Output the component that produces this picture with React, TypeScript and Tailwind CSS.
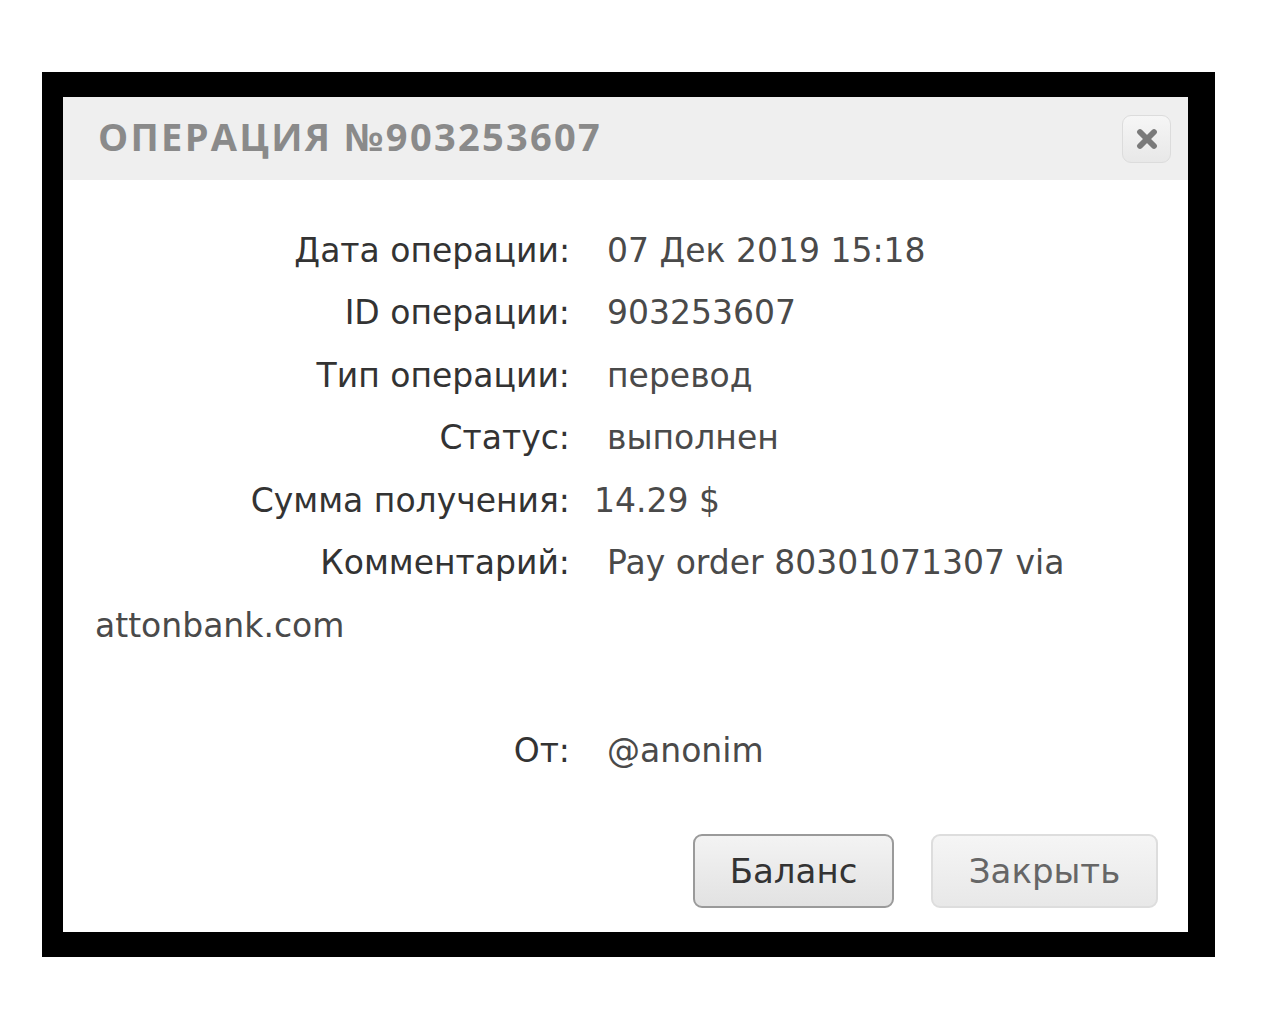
import { X } from "lucide-react";

const rows = [
  { label: "Дата операции:", value: "07 Дек 2019 15:18" },
  { label: "ID операции:", value: "903253607" },
  { label: "Тип операции:", value: "перевод" },
  { label: "Статус:", value: "выполнен" },
  { label: "Сумма получения:", value: "14.29 $", tight: true },
  { label: "Комментарий:", value: "Pay order 80301071307 via" },
];

function Row({ label, value, tight }: { label: string; value: string; tight?: boolean }) {
  return (
    <div className="flex h-[62.5px] items-center">
      <div className="w-[507px] shrink-0 text-right text-[#333]">{label}</div>
      <div className={tight ? "pl-[24px] text-[#4a4a4a]" : "pl-[37px] text-[#4a4a4a]"}>{value}</div>
    </div>
  );
}

export default function App() {
  return (
    <div className="min-h-[1024px] bg-white pl-[42px] pt-[72px]">
      <div className="w-[1173px] h-[885px] bg-black pl-[21px] pt-[25px]">
        <div className="w-[1125px] h-[835px] bg-white flex flex-col">
          {/* header */}
          <div className="h-[83px] bg-[#efefef] flex items-center justify-between pl-[35px] pr-[17px]">
            <h1
              className="text-[38px] font-bold tracking-[0.06em] text-[#8a8a8a] leading-none pb-[6px]"
              style={{ fontFamily: '"Open Sans", sans-serif' }}
            >
              ОПЕРАЦИЯ №903253607
            </h1>
            <button className="w-[49px] h-[48px] rounded-[9px] border border-[#dcdcdc] bg-gradient-to-b from-[#f6f6f6] to-[#e8e8e8] flex items-center justify-center">
              <X className="w-[28px] h-[28px] text-[#7a7a7a]" strokeWidth={5} />
            </button>
          </div>

          {/* body */}
          <div
            className="flex-1 flex flex-col pt-[39px] text-[33px] leading-none"
            style={{ fontFamily: '"DejaVu Sans", sans-serif' }}
          >
            {rows.map((r) => (
              <Row key={r.label} label={r.label} value={r.value} tight={r.tight} />
            ))}
            <div className="h-[62.5px] flex items-center pl-[32px] text-[#4a4a4a]">attonbank.com</div>
            <div className="h-[63px]" />
            <Row label="От:" value="@anonim" />

            <div className="flex justify-end gap-[37px] pr-[30px] mt-[52px]">
              <button className="w-[201px] h-[74px] rounded-[9px] border-2 border-[#9a9a9a] bg-gradient-to-b from-[#f3f3f3] to-[#e2e2e2] text-[34px] text-[#333]">
                Баланс
              </button>
              <button className="w-[227px] h-[74px] rounded-[9px] border-2 border-[#dddddd] bg-gradient-to-b from-[#f5f5f5] to-[#e8e8e8] text-[34px] text-[#666]">
                Закрыть
              </button>
            </div>
          </div>
        </div>
      </div>
    </div>
  );
}
